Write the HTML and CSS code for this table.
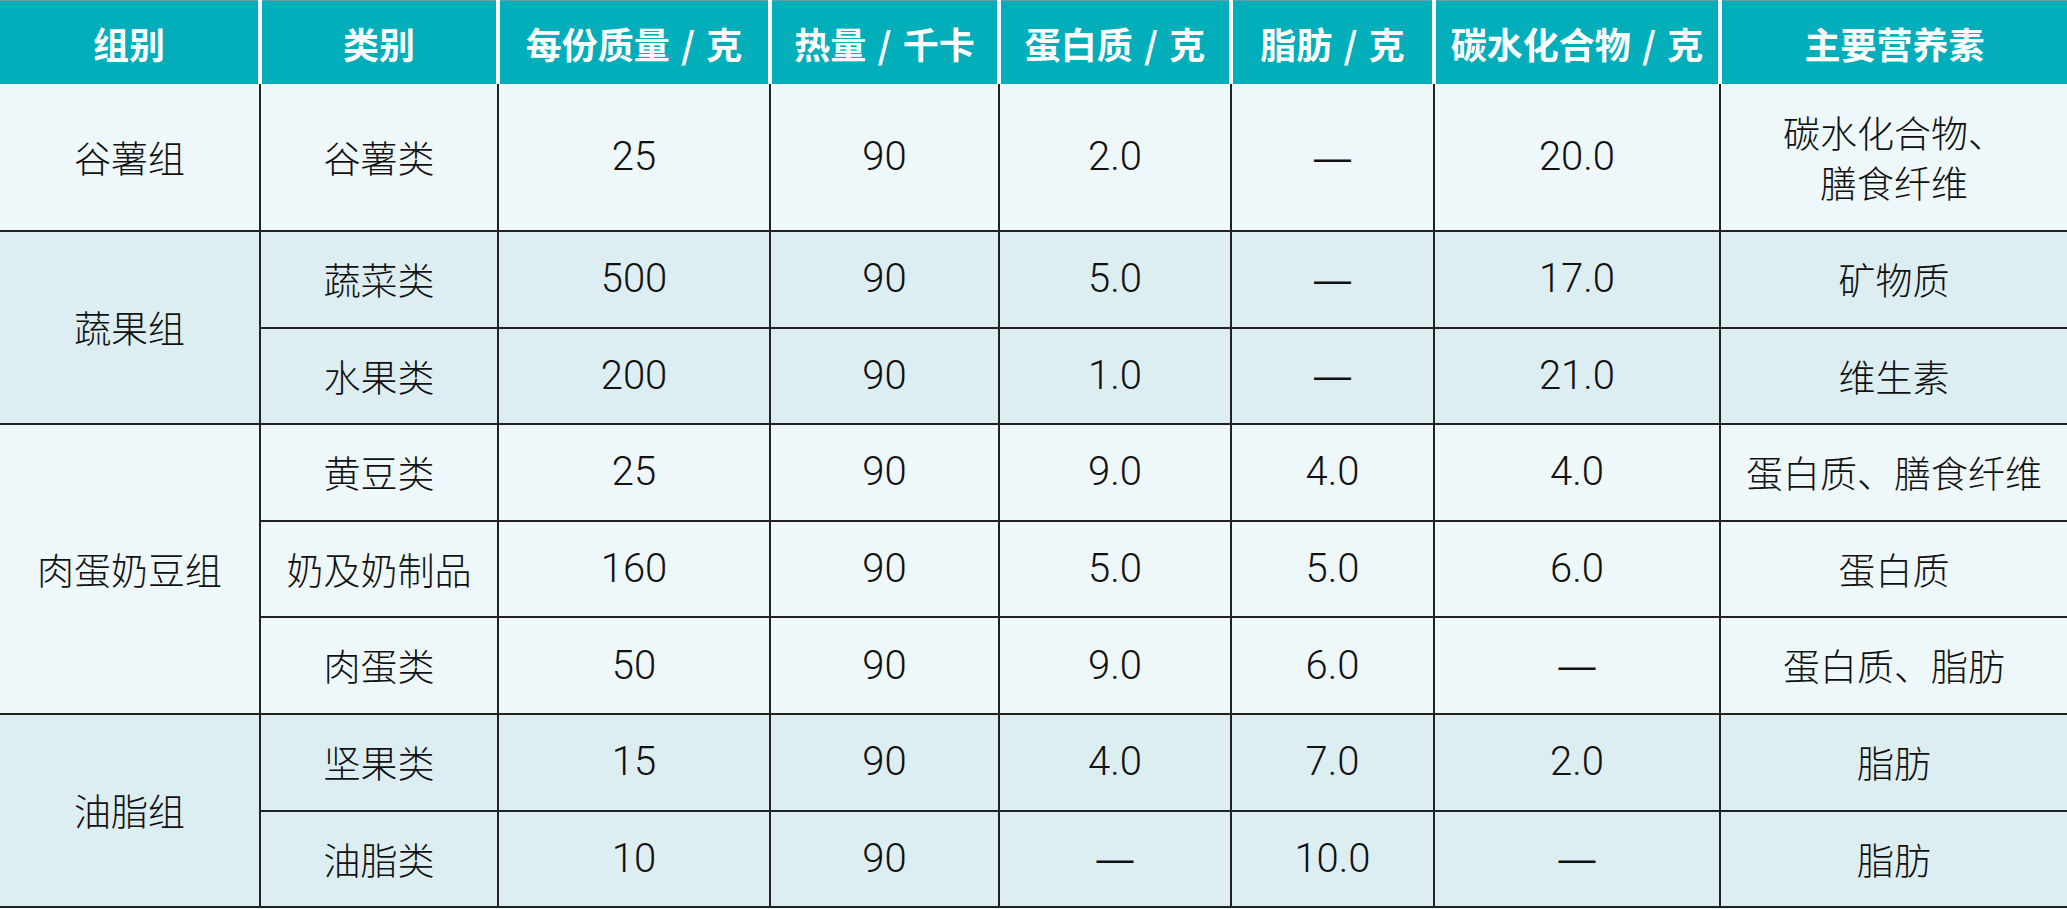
FILE: index.html
```html
<!DOCTYPE html>
<html lang="zh-CN">
<head>
<meta charset="utf-8">
<title>食物交换份</title>
<link rel="stylesheet" href="styles.css">
</head>
<body>
<table class="food-table">
  <colgroup>
    <col class="c1"><col class="c2"><col class="c3"><col class="c4"><col class="c5"><col class="c6"><col class="c7"><col class="c8">
  </colgroup>
  <thead>
    <tr>
      <th>组别</th>
      <th>类别</th>
      <th>每份质量 / 克</th>
      <th>热量 / 千卡</th>
      <th>蛋白质 / 克</th>
      <th>脂肪 / 克</th>
      <th>碳水化合物 / 克</th>
      <th>主要营养素</th>
    </tr>
  </thead>
  <tbody class="light">
    <tr class="tall">
      <td>谷薯组</td>
      <td>谷薯类</td>
      <td class="num">25</td>
      <td class="num">90</td>
      <td class="num">2.0</td>
      <td class="dash">—</td>
      <td class="num">20.0</td>
      <td class="multi">碳水化合物、<br>膳食纤维</td>
    </tr>
  </tbody>
  <tbody class="dark">
    <tr>
      <td rowspan="2">蔬果组</td>
      <td>蔬菜类</td>
      <td class="num">500</td>
      <td class="num">90</td>
      <td class="num">5.0</td>
      <td class="dash">—</td>
      <td class="num">17.0</td>
      <td>矿物质</td>
    </tr>
    <tr>
      <td>水果类</td>
      <td class="num">200</td>
      <td class="num">90</td>
      <td class="num">1.0</td>
      <td class="dash">—</td>
      <td class="num">21.0</td>
      <td>维生素</td>
    </tr>
  </tbody>
  <tbody class="light">
    <tr>
      <td rowspan="3">肉蛋奶豆组</td>
      <td>黄豆类</td>
      <td class="num">25</td>
      <td class="num">90</td>
      <td class="num">9.0</td>
      <td class="num">4.0</td>
      <td class="num">4.0</td>
      <td>蛋白质、膳食纤维</td>
    </tr>
    <tr>
      <td>奶及奶制品</td>
      <td class="num">160</td>
      <td class="num">90</td>
      <td class="num">5.0</td>
      <td class="num">5.0</td>
      <td class="num">6.0</td>
      <td>蛋白质</td>
    </tr>
    <tr>
      <td>肉蛋类</td>
      <td class="num">50</td>
      <td class="num">90</td>
      <td class="num">9.0</td>
      <td class="num">6.0</td>
      <td class="dash">—</td>
      <td>蛋白质、脂肪</td>
    </tr>
  </tbody>
  <tbody class="dark">
    <tr>
      <td rowspan="2">油脂组</td>
      <td>坚果类</td>
      <td class="num">15</td>
      <td class="num">90</td>
      <td class="num">4.0</td>
      <td class="num">7.0</td>
      <td class="num">2.0</td>
      <td>脂肪</td>
    </tr>
    <tr>
      <td>油脂类</td>
      <td class="num">10</td>
      <td class="num">90</td>
      <td class="dash">—</td>
      <td class="num">10.0</td>
      <td class="dash">—</td>
      <td>脂肪</td>
    </tr>
  </tbody>
</table>
</body>
</html>
```

FILE: styles.css
```css
html, body {
  margin: 0;
  padding: 0;
  background: #eef7fa;
}

.food-table {
  width: 2067px;
  table-layout: fixed;
  border-collapse: collapse;
  border-top: 1px solid #6f9ca1;
  border-bottom: 2px solid #222;
  font-family: "Noto Sans CJK SC", sans-serif;
  color: #111;
}

.c1 { width: 260px; }
.c2 { width: 238px; }
.c3 { width: 272px; }
.c4 { width: 229px; }
.c5 { width: 232px; }
.c6 { width: 203px; }
.c7 { width: 286px; }
.c8 { width: 347px; }

.food-table th {
  height: 83px;
  padding: 0;
  background: #03aebb;
  color: #fff;
  font-weight: 700;
  font-size: 36px;
  word-spacing: 3px;
  text-align: center;
  vertical-align: middle;
  border-left: 4px solid #fff;
  border-right: 4px solid #fff;
  border-bottom: 0;
}

.food-table th:first-child { border-left: 0; }
.food-table th:last-child { border-right: 0; }

.food-table td {
  height: 94.6px;
  padding: 0;
  font-weight: 300;
  font-size: 37px;
  text-align: center;
  vertical-align: middle;
  border: 2px solid #222;
  line-height: 1.2;
}

.food-table td.num {
  font-family: Roboto, "Liberation Sans", sans-serif;
  font-size: 40px;
  font-weight: 300;
}

.food-table td.dash {
  font-family: "Liberation Sans", sans-serif;
  font-size: 37px;
  font-weight: 400;
  line-height: 1;
}

.food-table thead + tbody tr:first-child td { border-top: 0; }

.food-table tr td:first-child { border-left: 0; }
.food-table tr td:last-child { border-right: 0; }

.food-table tr.tall td { height: 146px; }

.food-table td.multi { line-height: 50px; }

.light td { background: #eef7fa; }
.dark td { background: #ddeef3; }
```
